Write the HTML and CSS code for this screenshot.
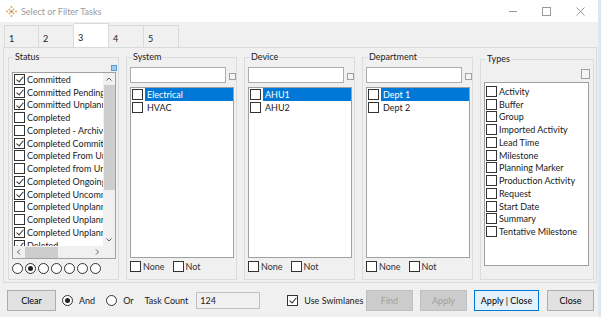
FILE: index.html
```html
<!DOCTYPE html>
<html lang="en">
<head>
    <meta charset="UTF-8">
    <title>Select or Filter Tasks</title>
    <link rel="stylesheet" href="styles.css">
</head>
<body>
<div class="window">
    <!-- title bar -->
    <div class="titlebar">
        <svg class="app-icon" width="11" height="11" viewBox="0 0 11 11">
            <g fill="#e2a55a">
                <circle cx="5.5" cy="1" r="1"/>
                <circle cx="3.5" cy="3.5" r="0.9"/><circle cx="7.5" cy="3.5" r="0.9"/>
                <circle cx="1" cy="5.5" r="1"/><circle cx="10" cy="5.5" r="1"/>
                <circle cx="3.5" cy="7.5" r="0.9"/><circle cx="7.5" cy="7.5" r="0.9"/>
                <circle cx="5.5" cy="10" r="1"/>
            </g>
            <circle cx="5.5" cy="5.5" r="1.3" fill="#c9853a"/>
        </svg>
        <span class="title">Select or Filter Tasks</span>
        <div class="controls">
            <svg width="34" height="22" viewBox="0 0 34 22"><line x1="13" y1="11.5" x2="21" y2="11.5" stroke="#9a9a9a"/></svg>
            <svg width="34" height="22" viewBox="0 0 34 22"><rect x="12.5" y="7.5" width="8" height="8" fill="none" stroke="#9a9a9a"/></svg>
            <svg width="34" height="22" viewBox="0 0 34 22"><path d="M12.5 7.5 L20.5 15.5 M20.5 7.5 L12.5 15.5" stroke="#9a9a9a"/></svg>
        </div>
    </div>

    <!-- tabs -->
    <div class="tabs">
        <div class="tab">1</div>
        <div class="tab">2</div>
        <div class="tab active">3</div>
        <div class="tab">4</div>
        <div class="tab">5</div>
    </div>

    <div class="page">
        <!-- Status -->
        <fieldset class="group">
            <legend>Status</legend>
            <div class="tool-row"><span class="mini blue"></span></div>
            <div class="listbox status-list">
                <div class="items">
                    <div class="item"><span class="cb on"></span>Committed</div>
                    <div class="item"><span class="cb on"></span>Committed Pending</div>
                    <div class="item"><span class="cb on"></span>Committed Unplanned</div>
                    <div class="item"><span class="cb"></span>Completed</div>
                    <div class="item"><span class="cb"></span>Completed - Archived</div>
                    <div class="item"><span class="cb on"></span>Completed Committed</div>
                    <div class="item"><span class="cb"></span>Completed From Unplanned</div>
                    <div class="item"><span class="cb"></span>Completed from Unplanned</div>
                    <div class="item"><span class="cb on"></span>Completed Ongoing</div>
                    <div class="item"><span class="cb on"></span>Completed Uncommitted</div>
                    <div class="item"><span class="cb"></span>Completed Unplanned</div>
                    <div class="item"><span class="cb"></span>Completed Unplanned</div>
                    <div class="item"><span class="cb on"></span>Completed Unplanned</div>
                    <div class="item"><span class="cb on"></span>Deleted</div>
                </div>
                <div class="vscroll">
                    <svg class="arrow" width="12" height="12" viewBox="0 0 12 12"><path d="M3.5 7.5 L6 5 L8.5 7.5" fill="none" stroke="#606060"/></svg>
                    <span class="vthumb"></span>
                    <svg class="arrow down" width="12" height="12" viewBox="0 0 12 12"><path d="M3.5 4.5 L6 7 L8.5 4.5" fill="none" stroke="#606060"/></svg>
                </div>
                <div class="hscroll">
                    <svg class="arrow" width="12" height="12" viewBox="0 0 12 12"><path d="M7 3.5 L4.5 6 L7 8.5" fill="none" stroke="#606060"/></svg>
                    <span class="hthumb"></span>
                    <svg class="arrow right" width="12" height="12" viewBox="0 0 12 12"><path d="M5 3.5 L7.5 6 L5 8.5" fill="none" stroke="#606060"/></svg>
                </div>
                <div class="corner"></div>
            </div>
            <div class="radios">
                <span class="radio"></span><span class="radio on"></span><span class="radio"></span><span class="radio"></span><span class="radio"></span><span class="radio"></span><span class="radio"></span>
            </div>
        </fieldset>

        <!-- System -->
        <fieldset class="group">
            <legend>System</legend>
            <div class="search-row"><span class="textbox"></span><span class="mini"></span></div>
            <div class="listbox short">
                <div class="item"><span class="cb"></span><span class="sel">Electrical</span></div>
                <div class="item"><span class="cb"></span><span class="txt">HVAC</span></div>
            </div>
            <div class="opts"><span class="cb"></span>None<span class="cb gap"></span>Not</div>
        </fieldset>

        <!-- Device -->
        <fieldset class="group">
            <legend>Device</legend>
            <div class="search-row"><span class="textbox"></span><span class="mini"></span></div>
            <div class="listbox short">
                <div class="item"><span class="cb"></span><span class="sel">AHU1</span></div>
                <div class="item"><span class="cb"></span><span class="txt">AHU2</span></div>
            </div>
            <div class="opts"><span class="cb"></span>None<span class="cb gap"></span>Not</div>
        </fieldset>

        <!-- Department -->
        <fieldset class="group">
            <legend>Department</legend>
            <div class="search-row"><span class="textbox"></span><span class="mini"></span></div>
            <div class="listbox short">
                <div class="item"><span class="cb"></span><span class="sel">Dept 1</span></div>
                <div class="item"><span class="cb"></span><span class="txt">Dept 2</span></div>
            </div>
            <div class="opts"><span class="cb"></span>None<span class="cb gap"></span>Not</div>
        </fieldset>

        <!-- Types -->
        <fieldset class="group types">
            <legend>Types</legend>
            <div class="tool-row big"><span class="mini large"></span></div>
            <div class="listbox types-list">
                <div class="item"><span class="cb"></span>Activity</div>
                <div class="item"><span class="cb"></span>Buffer</div>
                <div class="item"><span class="cb"></span>Group</div>
                <div class="item"><span class="cb"></span>Imported Activity</div>
                <div class="item"><span class="cb"></span>Lead Time</div>
                <div class="item"><span class="cb"></span>Milestone</div>
                <div class="item"><span class="cb"></span>Planning Marker</div>
                <div class="item"><span class="cb"></span>Production Activity</div>
                <div class="item"><span class="cb"></span>Request</div>
                <div class="item"><span class="cb"></span>Start Date</div>
                <div class="item"><span class="cb"></span>Summary</div>
                <div class="item"><span class="cb"></span>Tentative Milestone</div>
            </div>
        </fieldset>
    </div>

    <!-- bottom buttons -->
    <div class="footer">
        <button class="btn clear">Clear</button>
        <span class="radio on and"></span><span class="lbl">And</span>
        <span class="radio or"></span><span class="lbl">Or</span>
        <span class="lbl count">Task Count</span>
        <span class="countbox">124</span>
        <span class="cb on swim"></span><span class="lbl">Use Swimlanes</span>
        <button class="btn disabled find">Find</button>
        <button class="btn disabled">Apply</button>
        <button class="btn default">Apply | Close</button>
        <button class="btn">Close</button>
    </div>
</div>
</body>
</html>
```

FILE: styles.css
```css
body {
    margin: 0;
    background-color: #dfe6ee;
    font-family: Lato, "Noto Sans", sans-serif;
    font-size: 9px;
    color: #1a1a1a;
}

.window {
    width: 598px;
    height: 317px;
    background-color: #f0f0f0;
    overflow: hidden;
}

/* title bar */
.titlebar {
    height: 22px;
    background-color: #fff;
    display: flex;
    align-items: center;
}

.app-icon {
    margin-left: 6px;
    margin-right: 4px;
}

.title {
    color: #9a9a9a;
    font-size: 9px;
}

.controls {
    margin-left: auto;
    display: flex;
}

/* tabs */
.tabs {
    height: 25px;
    display: flex;
    align-items: flex-end;
    padding-left: 4px;
}

.tab {
    width: 35px;
    height: 22px;
    box-sizing: border-box;
    border: 1px solid #dadada;
    border-bottom: none;
    border-left: none;
    padding: 7px 0 0 4px;
    background-color: #f0f0f0;
}

.tab:first-child {
    border-left: 1px solid #dadada;
}

.tab.active {
    height: 24px;
    padding-top: 8px;
    background-color: #fff;
}

/* page */
.page {
    margin-left: 3px;
    width: 594px;
    height: 236px;
    box-sizing: border-box;
    border: 1px solid #dadada;
    padding: 3px 2px 2px 4px;
    display: flex;
    gap: 7px;
}

.group {
    margin: 0;
    width: 111px;
    box-sizing: border-box;
    border: 1px solid #dcdcdc;
    padding: 0 0 0 3px;
    min-width: 0;
    display: flex;
    flex-direction: column;
}

.group legend {
    padding: 0 1px;
    margin-left: 2px;
    line-height: 12px;
}

.group.types {
    width: 114px;
    margin-top: 2px;
}

.tool-row {
    height: 9px;
    display: flex;
    justify-content: flex-end;
    align-items: flex-start;
    padding-right: 1px;
}

.tool-row.big {
    height: 17px;
    padding-right: 3px;
    align-items: center;
}

.mini {
    width: 5px;
    height: 5px;
    border: 1px solid #a0a0a0;
    background-color: #f4f4f4;
    margin-top: 2px;
}

.mini.blue {
    width: 4px;
    height: 4px;
    border-color: #5b9bd5;
    background-color: #9fcdef;
}

.mini.large {
    width: 7px;
    height: 8px;
    margin-top: 0;
}

.search-row {
    margin-top: 4px;
    height: 16px;
    display: flex;
    align-items: center;
}

.textbox {
    width: 96px;
    height: 16px;
    box-sizing: border-box;
    border: 1px solid #abadb3;
    background-color: #fff;
    margin-right: 3px;
}

/* list boxes */
.listbox {
    width: 104px;
    box-sizing: border-box;
    border: 1px solid #a0a0a0;
    background-color: #fff;
    overflow: hidden;
}

.listbox.short {
    margin-top: 4px;
    height: 171px;
}

.status-list {
    height: 187px;
    display: grid;
    grid-template-columns: 1fr 12px;
    grid-template-rows: 1fr 12px;
}

.types-list {
    width: 105px;
    height: 184px;
    padding-top: 2px;
}

.items {
    overflow: hidden;
}

.item {
    height: 12.75px;
    display: flex;
    align-items: center;
    white-space: nowrap;
    padding-left: 1px;
}

.short .item {
    height: 13px;
}

.sel {
    flex: 1;
    background-color: #0078d7;
    color: #fff;
    padding-left: 2px;
    line-height: 13px;
}

.txt {
    padding-left: 2px;
}

.cb {
    flex: none;
    width: 11px;
    height: 11px;
    box-sizing: border-box;
    border: 1px solid #333;
    background-color: #fff;
    margin-right: 2px;
    position: relative;
}

.cb.on::after {
    content: "";
    position: absolute;
    left: 2.5px;
    top: 0.5px;
    width: 3px;
    height: 6px;
    border: solid #333;
    border-width: 0 1px 1px 0;
    transform: rotate(40deg);
}

/* scrollbars */
.vscroll {
    background-color: #f0f0f0;
    display: flex;
    flex-direction: column;
    align-items: center;
}

.arrow {
    flex: none;
}

.vthumb {
    width: 11px;
    height: 105px;
    background-color: #cdcdcd;
}

.arrow.down {
    margin-top: auto;
}

.hscroll {
    background-color: #f0f0f0;
    display: flex;
    align-items: center;
}

.hthumb {
    width: 33px;
    height: 11px;
    background-color: #cdcdcd;
}

.arrow.right {
    margin-left: auto;
}

.corner {
    background-color: #f0f0f0;
}

/* radios */
.radios {
    margin-top: 4px;
    display: flex;
    gap: 2px;
}

.radio {
    flex: none;
    width: 11px;
    height: 11px;
    box-sizing: border-box;
    border: 1px solid #333;
    border-radius: 50%;
    background-color: #fff;
    position: relative;
}

.radio.on::after {
    content: "";
    position: absolute;
    left: 2px;
    top: 2px;
    width: 5px;
    height: 5px;
    border-radius: 50%;
    background-color: #222;
}

.opts {
    margin-top: 2px;
    height: 13px;
    display: flex;
    align-items: center;
    color: #333;
}

.opts .cb.gap {
    margin-left: 8px;
}

/* footer */
.footer {
    height: 34px;
    display: flex;
    align-items: center;
    padding-left: 7px;
    white-space: nowrap;
}

.footer > * {
    flex: none;
}

.btn {
    font: inherit;
    height: 21px;
    width: 47px;
    padding: 0;
    border: 1px solid #adadad;
    background-color: #e1e1e1;
    color: #000;
    margin-left: 7px;
}

.btn.clear {
    width: 49px;
    margin-left: 0;
    margin-right: 6px;
}

.btn.disabled {
    border-color: #bfbfbf;
    background-color: #cccccc;
    color: #a0a0a0;
}

.btn.find {
    margin-left: auto;
}

.btn.default {
    width: 65px;
    border: 1px solid #0078d7;
    background-color: #e5f1fb;
}

.btn:last-child {
    margin-left: 8px;
    margin-right: 4px;
}

.lbl {
    margin-left: 6px;
}

.radio.or {
    margin-left: 11px;
}

.lbl.count {
    margin-left: 11px;
}

.countbox {
    width: 64px;
    height: 17px;
    box-sizing: border-box;
    border: 1px solid #bfbfbf;
    background-color: #f0f0f0;
    margin-left: 8px;
    padding-left: 3px;
    line-height: 15px;
}

.cb.swim {
    margin-left: 27px;
    margin-right: 0;
}
```
